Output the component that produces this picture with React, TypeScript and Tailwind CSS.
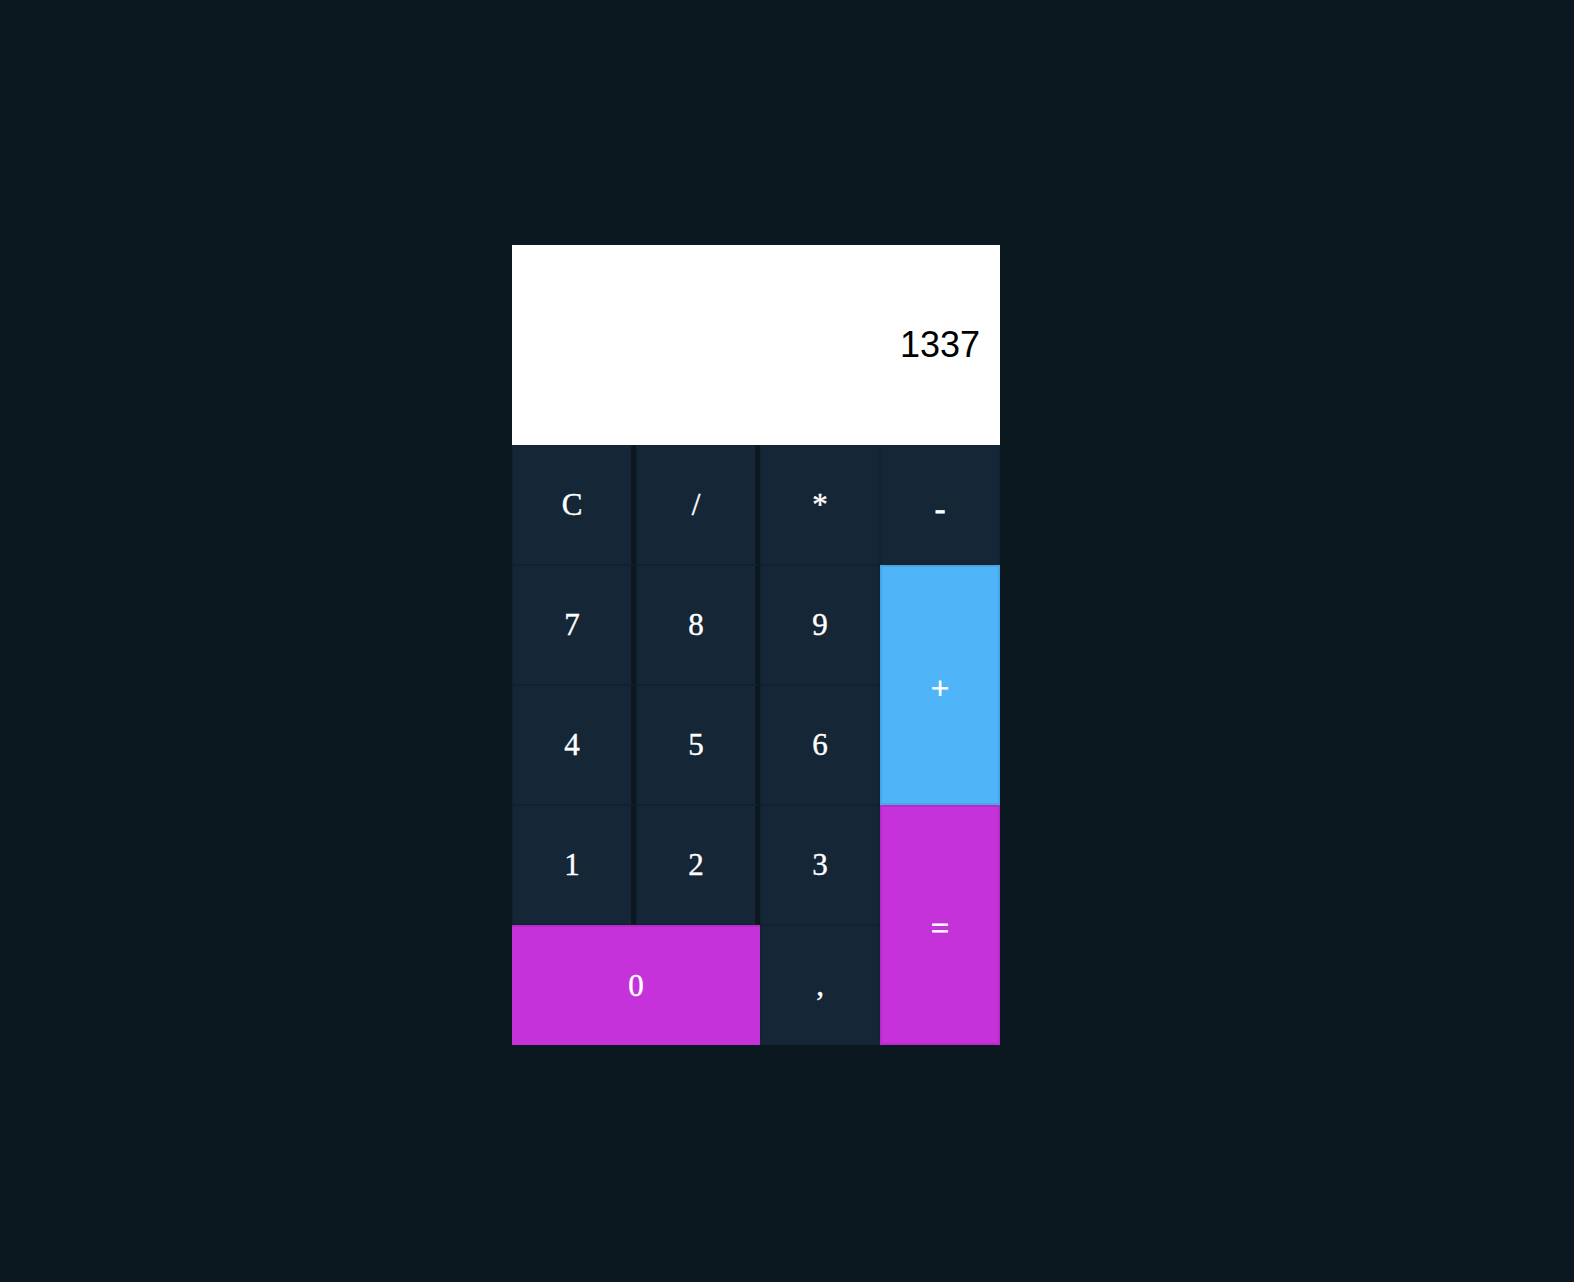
import React from "react";

type Key = {
    label: string;
    className?: string;
};

const dark = "bg-[#152636] border border-black/10";
const gap = "border-r-[5px] border-r-[#0c1820]";
const sans = "font-['Liberation_Sans',Arial,sans-serif] text-[32px] pt-[6px] [-webkit-text-stroke:0.8px_white]";

const keys: Key[] = [
    { label: "C", className: `${dark} ${gap}` },
    { label: "/", className: `${dark} ${gap}` },
    { label: "*", className: dark },
    { label: "-", className: `${dark} ${sans}` },
    { label: "7", className: `${dark} ${gap}` },
    { label: "8", className: `${dark} ${gap}` },
    { label: "9", className: dark },
    { label: "+", className: `row-span-2 bg-[#50b5f8] border-2 border-[#47a6e6] ${sans}` },
    { label: "4", className: `${dark} ${gap}` },
    { label: "5", className: `${dark} ${gap}` },
    { label: "6", className: dark },
    { label: "1", className: `${dark} ${gap}` },
    { label: "2", className: `${dark} ${gap}` },
    { label: "3", className: dark },
    { label: "=", className: `row-span-2 bg-[#c632d9] border-2 border-[#b52cc8] ${sans}` },
    { label: "0", className: "col-span-2 bg-[#c632d9] border-t-2 border-[#b52cc8]" },
    { label: ",", className: dark },
];

export default function App() {
    return (
        <main className="min-h-screen bg-[#0c1820] pl-[512px] pt-[245px]">
            <div className="w-[488px]">
                <div className="flex h-[200px] items-center justify-end bg-white pr-[20px]">
                    <span className="font-['Liberation_Sans',Arial,sans-serif] text-[36px] text-black">
                        1337
                    </span>
                </div>

                <div className="grid grid-cols-[124px_124px_120px_120px] grid-rows-[repeat(5,120px)]">
                    {keys.map((key) => (
                        <button
                            key={key.label}
                            type="button"
                            className={`flex items-center justify-center font-['Liberation_Serif','Times_New_Roman',serif] text-[31px] text-white [-webkit-text-stroke:0.4px_white] ${key.className ?? ""}`}
                        >
                            {key.label}
                        </button>
                    ))}
                </div>
            </div>
        </main>
    );
}
